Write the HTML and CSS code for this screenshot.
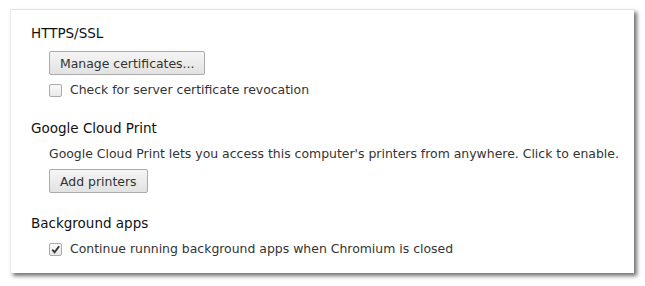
FILE: index.html
```html
<!DOCTYPE html>
<html>
<head>
<meta charset="utf-8">
<link rel="stylesheet" href="styles.css">
</head>
<body>
<div class="panel">
  <section class="sec">
    <h3 class="title">HTTPS/SSL</h3>
    <div class="body">
      <button class="btn">Manage certificates...</button>
      <label class="check"><span class="box"></span><span>Check for server certificate revocation</span></label>
    </div>
  </section>
  <section class="sec">
    <h3 class="title">Google Cloud Print</h3>
    <div class="body">
      <p class="desc">Google Cloud Print lets you access this computer's printers from anywhere. Click to enable.</p>
      <button class="btn">Add printers</button>
    </div>
  </section>
  <section class="sec">
    <h3 class="title">Background apps</h3>
    <div class="body">
      <label class="check"><span class="box checked"><svg viewBox="0 0 12 12" width="11" height="11"><path d="M2.5 6.2 L5 9 L10 2.5" fill="none" stroke="#333" stroke-width="2"/></svg></span><span>Continue running background apps when Chromium is closed</span></label>
    </div>
  </section>
</div>
</body>
</html>
```
FILE: styles.css
```css
html, body { margin: 0; padding: 0; background: #fff; }
body { width: 645px; height: 286px; overflow: hidden; font-family: "DejaVu Sans", sans-serif; }
.panel {
  margin: 9px 0 0 10px;
  width: 624px;
  height: 264px;
  box-sizing: border-box;
  border-top: 1px solid #e4e4e4;
  border-left: 1px solid #ececec;
  background: #fff;
  box-shadow: 3px 3px 4px rgba(0,0,0,0.55);
  padding: 15px 0 0 20px;
}
.sec { margin: 0 0 22px 0; }
.title { margin: 0; font-size: 13.5px; font-weight: normal; color: #111; line-height: 16px; }
.body { padding: 10px 0 0 18px; display: flex; flex-direction: column; align-items: flex-start; gap: 7px; }
.btn {
  font-family: "DejaVu Sans", sans-serif;
  font-size: 12.45px; color: #333;
  height: 24px; padding: 0 10px;
  border: 1px solid #aaa; border-radius: 2px;
  background: linear-gradient(#f5f5f5, #e2e2e2);
}
.check { display: flex; align-items: center; gap: 8px; font-size: 12.45px; color: #333; line-height: 16px; }
.desc { margin: 0; font-size: 12.45px; color: #333; line-height: 16px; }
.box {
  width: 11px; height: 11px; border: 1px solid #aaa; border-radius: 2px;
  background: linear-gradient(#fafafa, #e8e8e8);
  display: flex; align-items: center; justify-content: center;
}
```
